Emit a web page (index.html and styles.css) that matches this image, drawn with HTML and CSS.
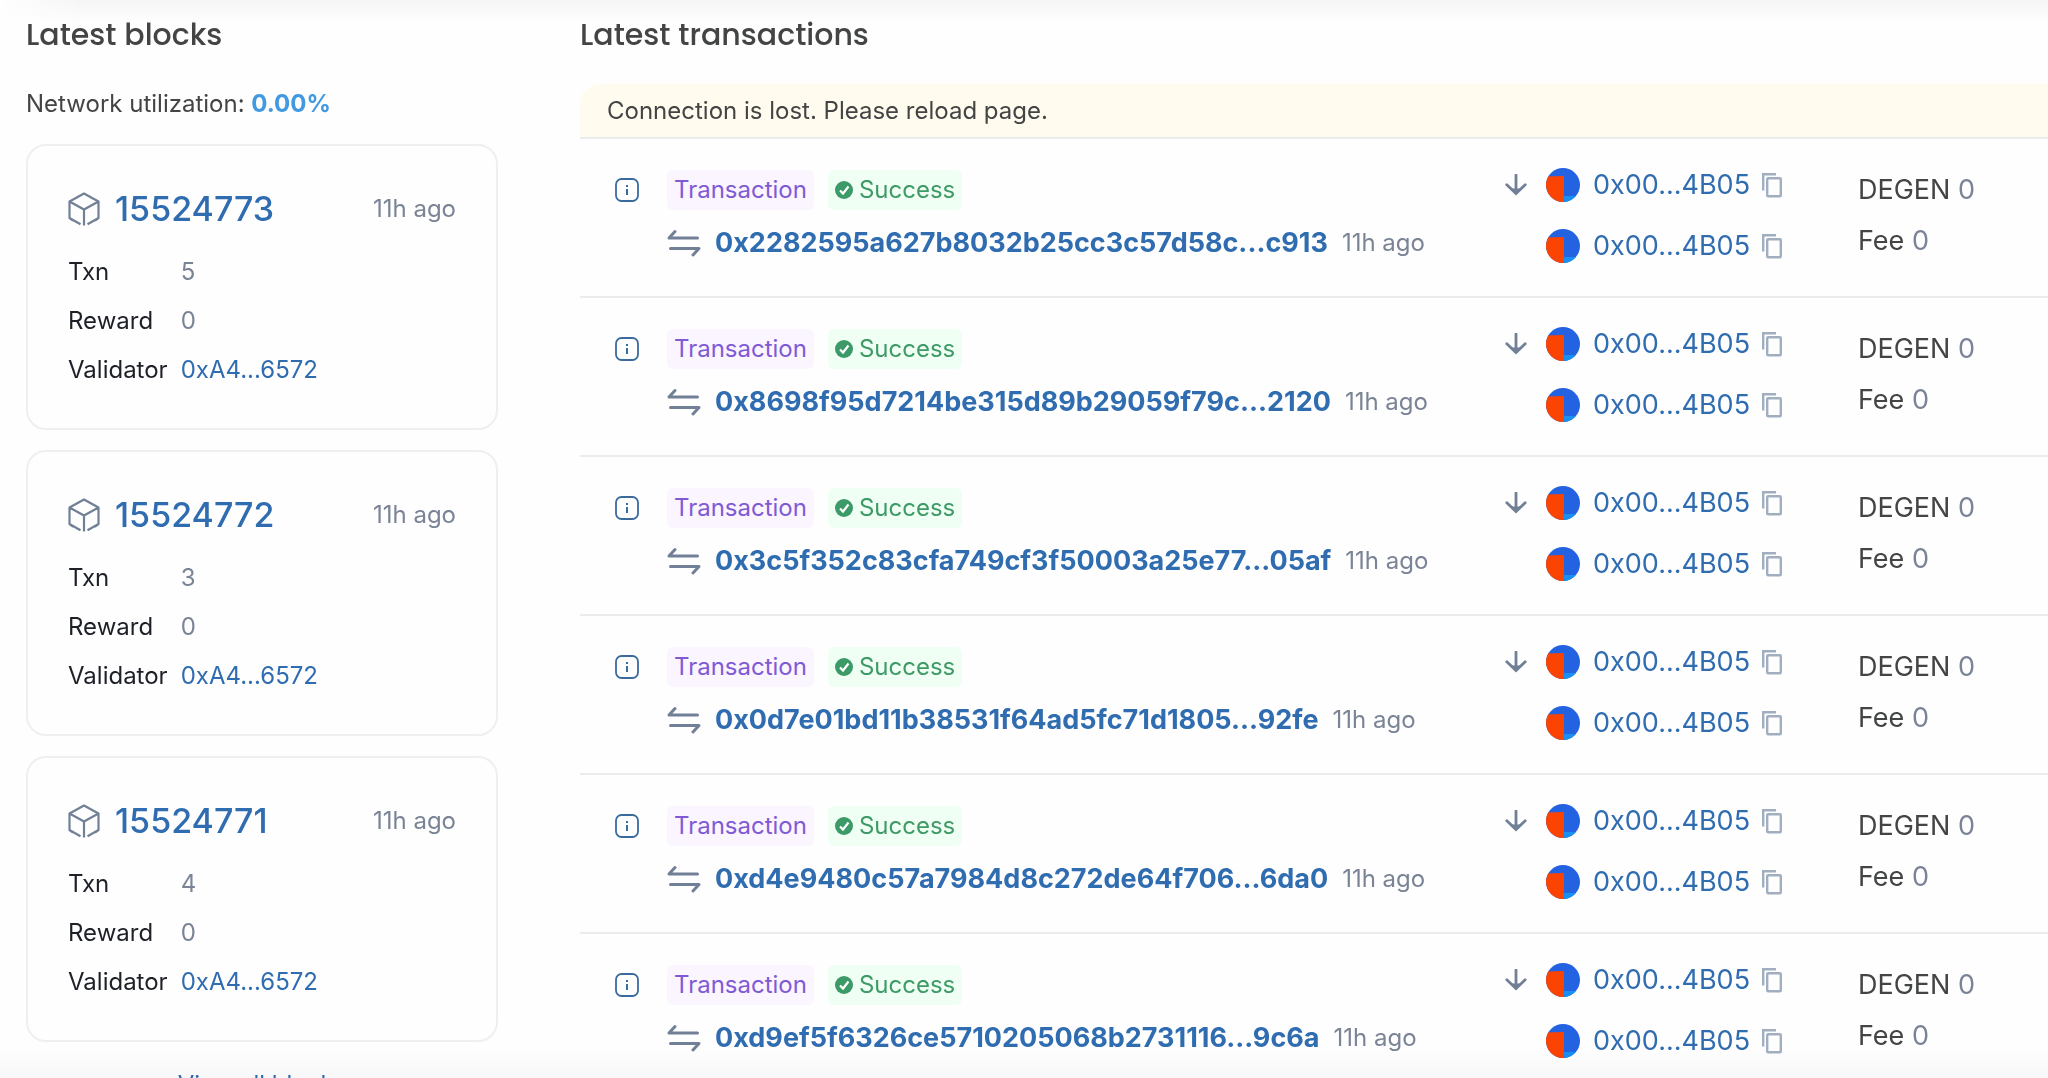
FILE: index.html
```html
<!DOCTYPE html>
<html lang="en">
<head>
<meta charset="utf-8">
<title>Latest blocks and transactions</title>
<link rel="stylesheet" href="styles.css">
</head>
<body>
<svg class="sprite" aria-hidden="true">
  <symbol id="cube" viewBox="0 0 32 34"><path d="M5 28.500 1.500 26V9.500L16 1.500l14.500 8V26L27 28.500M1.500 9.500 16 17.500l14.500-8M16 17.500V33.500M1.500 26l11 6.200M30.500 26l-11 6.200" fill="none" stroke="currentColor" stroke-width="2.200" stroke-linejoin="round"/></symbol>
  <symbol id="info" viewBox="0 0 24 24"><rect x="1" y="1" width="22" height="22" rx="5.500" fill="none" stroke="currentColor" stroke-width="1.800"/><path d="M12 11v6M12 7v2" stroke="currentColor" stroke-width="2"/></symbol>
  <symbol id="swap" viewBox="0 0 34 28"><path d="M30.500 9H2L8 2.500M3.500 19.500H32L26 26" fill="none" stroke="currentColor" stroke-width="3" stroke-linecap="round" stroke-linejoin="round"/></symbol>
  <symbol id="check" viewBox="0 0 18 18"><circle cx="9" cy="9" r="9" fill="currentColor"/><path d="M5 9.500 8 12.500l5.500-7" fill="none" stroke="#fff" stroke-width="2.200"/></symbol>
  <symbol id="down" viewBox="0 0 22 22"><path d="M11 1v18M1.800 10.800 11 19.500l9.200-8.700" fill="none" stroke="currentColor" stroke-width="2.800" stroke-linecap="round"/><path d="M6 14.500h10L11 20.500z" fill="currentColor"/></symbol>
  <symbol id="avatar" viewBox="0 0 34 34"><clipPath id="disc"><circle cx="17" cy="17" r="17"/></clipPath><g clip-path="url(#disc)"><path d="M0 0h34v34H0z" fill="#2362e1"/><path d="M18 28h16v6H18z" fill="#1890f2"/><path d="M0 8.500 18 8v26H0z" fill="#fb4302"/></g></symbol>
  <symbol id="copy" viewBox="0 0 20 26"><path d="M1.200 18.500V2.200H14" fill="none" stroke="currentColor" stroke-width="2.400"/><rect x="5.200" y="6.200" width="13.600" height="18" rx="1" fill="none" stroke="currentColor" stroke-width="2.400"/></symbol>
</svg>
<main class="page">
  <section class="blocks">
    <h2 class="title">Latest blocks</h2>
    <p class="utilization">Network utilization: <strong>0.00%</strong></p>
    <div class="cards">
      <article class="card">
        <header class="card-head"><svg class="cube"><use href="#cube"/></svg><a class="number" href="#">15524773</a><span class="time">11h ago</span></header>
        <dl class="facts"><dt>Txn</dt><dd>5</dd><dt>Reward</dt><dd>0</dd><dt>Validator</dt><dd><a href="#">0xA4...6572</a></dd></dl>
      </article>
      <article class="card">
        <header class="card-head"><svg class="cube"><use href="#cube"/></svg><a class="number" href="#">15524772</a><span class="time">11h ago</span></header>
        <dl class="facts"><dt>Txn</dt><dd>3</dd><dt>Reward</dt><dd>0</dd><dt>Validator</dt><dd><a href="#">0xA4...6572</a></dd></dl>
      </article>
      <article class="card">
        <header class="card-head"><svg class="cube"><use href="#cube"/></svg><a class="number" href="#">15524771</a><span class="time">11h ago</span></header>
        <dl class="facts"><dt>Txn</dt><dd>4</dd><dt>Reward</dt><dd>0</dd><dt>Validator</dt><dd><a href="#">0xA4...6572</a></dd></dl>
      </article>
    </div>
    <a class="all" href="#">View all blocks</a>
  </section>
  <section class="transactions">
    <h2 class="title">Latest transactions</h2>
    <p class="alert" role="alert">Connection is lost. Please reload page.</p>
    <ul class="rows">
      <li class="row">
        <button class="info" aria-label="Details"><svg><use href="#info"/></svg></button>
        <div class="tx">
          <div class="tags"><span class="tag kind">Transaction</span><span class="tag ok"><svg><use href="#check"/></svg>Success</span></div>
          <div class="hash"><svg><use href="#swap"/></svg><a href="#">0x2282595a627b8032b25cc3c57d58c...c913</a><span class="time">11h ago</span></div>
        </div>
        <div class="route">
          <svg class="down"><use href="#down"/></svg>
          <div class="addresses">
            <div class="address"><svg class="avatar"><use href="#avatar"/></svg><a href="#">0x00...4B05</a><button aria-label="Copy"><svg><use href="#copy"/></svg></button></div>
            <div class="address"><svg class="avatar"><use href="#avatar"/></svg><a href="#">0x00...4B05</a><button aria-label="Copy"><svg><use href="#copy"/></svg></button></div>
          </div>
        </div>
        <div class="amounts"><p>DEGEN <span>0</span></p><p>Fee <span>0</span></p></div>
      </li>
      <li class="row">
        <button class="info" aria-label="Details"><svg><use href="#info"/></svg></button>
        <div class="tx">
          <div class="tags"><span class="tag kind">Transaction</span><span class="tag ok"><svg><use href="#check"/></svg>Success</span></div>
          <div class="hash"><svg><use href="#swap"/></svg><a href="#">0x8698f95d7214be315d89b29059f79c...2120</a><span class="time">11h ago</span></div>
        </div>
        <div class="route">
          <svg class="down"><use href="#down"/></svg>
          <div class="addresses">
            <div class="address"><svg class="avatar"><use href="#avatar"/></svg><a href="#">0x00...4B05</a><button aria-label="Copy"><svg><use href="#copy"/></svg></button></div>
            <div class="address"><svg class="avatar"><use href="#avatar"/></svg><a href="#">0x00...4B05</a><button aria-label="Copy"><svg><use href="#copy"/></svg></button></div>
          </div>
        </div>
        <div class="amounts"><p>DEGEN <span>0</span></p><p>Fee <span>0</span></p></div>
      </li>
      <li class="row">
        <button class="info" aria-label="Details"><svg><use href="#info"/></svg></button>
        <div class="tx">
          <div class="tags"><span class="tag kind">Transaction</span><span class="tag ok"><svg><use href="#check"/></svg>Success</span></div>
          <div class="hash"><svg><use href="#swap"/></svg><a href="#">0x3c5f352c83cfa749cf3f50003a25e77...05af</a><span class="time">11h ago</span></div>
        </div>
        <div class="route">
          <svg class="down"><use href="#down"/></svg>
          <div class="addresses">
            <div class="address"><svg class="avatar"><use href="#avatar"/></svg><a href="#">0x00...4B05</a><button aria-label="Copy"><svg><use href="#copy"/></svg></button></div>
            <div class="address"><svg class="avatar"><use href="#avatar"/></svg><a href="#">0x00...4B05</a><button aria-label="Copy"><svg><use href="#copy"/></svg></button></div>
          </div>
        </div>
        <div class="amounts"><p>DEGEN <span>0</span></p><p>Fee <span>0</span></p></div>
      </li>
      <li class="row">
        <button class="info" aria-label="Details"><svg><use href="#info"/></svg></button>
        <div class="tx">
          <div class="tags"><span class="tag kind">Transaction</span><span class="tag ok"><svg><use href="#check"/></svg>Success</span></div>
          <div class="hash"><svg><use href="#swap"/></svg><a href="#">0x0d7e01bd11b38531f64ad5fc71d1805...92fe</a><span class="time">11h ago</span></div>
        </div>
        <div class="route">
          <svg class="down"><use href="#down"/></svg>
          <div class="addresses">
            <div class="address"><svg class="avatar"><use href="#avatar"/></svg><a href="#">0x00...4B05</a><button aria-label="Copy"><svg><use href="#copy"/></svg></button></div>
            <div class="address"><svg class="avatar"><use href="#avatar"/></svg><a href="#">0x00...4B05</a><button aria-label="Copy"><svg><use href="#copy"/></svg></button></div>
          </div>
        </div>
        <div class="amounts"><p>DEGEN <span>0</span></p><p>Fee <span>0</span></p></div>
      </li>
      <li class="row">
        <button class="info" aria-label="Details"><svg><use href="#info"/></svg></button>
        <div class="tx">
          <div class="tags"><span class="tag kind">Transaction</span><span class="tag ok"><svg><use href="#check"/></svg>Success</span></div>
          <div class="hash"><svg><use href="#swap"/></svg><a href="#">0xd4e9480c57a7984d8c272de64f706...6da0</a><span class="time">11h ago</span></div>
        </div>
        <div class="route">
          <svg class="down"><use href="#down"/></svg>
          <div class="addresses">
            <div class="address"><svg class="avatar"><use href="#avatar"/></svg><a href="#">0x00...4B05</a><button aria-label="Copy"><svg><use href="#copy"/></svg></button></div>
            <div class="address"><svg class="avatar"><use href="#avatar"/></svg><a href="#">0x00...4B05</a><button aria-label="Copy"><svg><use href="#copy"/></svg></button></div>
          </div>
        </div>
        <div class="amounts"><p>DEGEN <span>0</span></p><p>Fee <span>0</span></p></div>
      </li>
      <li class="row">
        <button class="info" aria-label="Details"><svg><use href="#info"/></svg></button>
        <div class="tx">
          <div class="tags"><span class="tag kind">Transaction</span><span class="tag ok"><svg><use href="#check"/></svg>Success</span></div>
          <div class="hash"><svg><use href="#swap"/></svg><a href="#">0xd9ef5f6326ce5710205068b2731116...9c6a</a><span class="time">11h ago</span></div>
        </div>
        <div class="route">
          <svg class="down"><use href="#down"/></svg>
          <div class="addresses">
            <div class="address"><svg class="avatar"><use href="#avatar"/></svg><a href="#">0x00...4B05</a><button aria-label="Copy"><svg><use href="#copy"/></svg></button></div>
            <div class="address"><svg class="avatar"><use href="#avatar"/></svg><a href="#">0x00...4B05</a><button aria-label="Copy"><svg><use href="#copy"/></svg></button></div>
          </div>
        </div>
        <div class="amounts"><p>DEGEN <span>0</span></p><p>Fee <span>0</span></p></div>
      </li>
    </ul>
  </section>
</main>
<div class="shade shade-top"></div>
<div class="shade shade-bottom"></div>
</body>
</html>
```
FILE: styles.css
```css
* { box-sizing: border-box; margin: 0; padding: 0; }

html { overflow: hidden; }

body {
  background: #fefefe;
  color: #434444;
  font: 24px/32px Inter, "Liberation Sans", sans-serif;
}

a { color: #2f6cb0; text-decoration: none; }
ul { list-style: none; }
button { border: 0; background: none; cursor: pointer; }
svg { display: block; flex: none; }
.sprite { position: absolute; width: 0; height: 0; }

.page {
  display: grid;
  grid-template-columns: 472px minmax(0, 1fr);
  gap: 82px;
  padding: 14px 0 0 26px;
}

.title {
  font: 500 30px/42px Poppins, Inter, "Liberation Sans", sans-serif;
}

.time { color: #7a8496; }

/* Blocks */
.utilization { margin-top: 32px; }
.utilization strong { color: #4299e1; font-weight: 700; }

.cards {
  display: grid;
  gap: 20px;
  margin-top: 24px;
}

.card {
  height: 286px;
  padding: 42px 40px 0;
  border: 2px solid #eeeff1;
  border-radius: 20px;
}

.card-head {
  display: flex;
  align-items: center;
  height: 42px;
}

.cube { width: 32px; height: 34px; margin-right: 15px; color: #718096; }
.number { font-size: 34px; font-weight: 500; }
.card-head .time { margin-left: auto; }

.facts {
  display: grid;
  grid-template-columns: max-content 1fr;
  column-gap: 13px;
  margin-top: 17px;
  line-height: 49px;
}

.facts dt { color: #1d2027; }
.facts dd { color: #7a8496; }

.all { display: block; margin-top: 27px; text-align: center; }

/* Transactions */
.alert {
  height: 53px;
  margin-top: 28px;
  padding-left: 27px;
  border-radius: 20px 0 0 0;
  background: #fffbef;
  line-height: 53px;
}

.rows { border-top: 2px solid #ebecee; }

.row {
  display: grid;
  grid-template-columns: 24px minmax(0, 1fr) 353px 190px;
  height: 159px;
  padding-left: 35px;
  border-bottom: 2px solid #ebecee;
}

.info { width: 24px; height: 24px; margin-top: 39px; color: #3b6a9f; }
.info svg { width: 24px; height: 24px; }

.tx { padding: 31px 0 0 28px; }
.tags { display: flex; gap: 14px; }

.tag {
  display: flex;
  align-items: center;
  gap: 6px;
  height: 40px;
  padding: 0 7px;
  border-radius: 6px;
}

.kind { background: #faf5ff; color: #805ad5; }
.ok { background: #f0fff4; color: #3e9a66; }
.ok svg { width: 18px; height: 18px; color: #3b9a67; }

.hash {
  display: flex;
  align-items: center;
  height: 44px;
  margin-top: 11px;
  white-space: nowrap;
}

.hash svg { width: 34px; height: 28px; margin-right: 14px; color: #718096; }
.hash a { margin-right: 14px; font-size: 27px; font-weight: 700; }

.route { display: flex; gap: 19px; padding-top: 29px; }
.down { width: 22px; height: 22px; margin-top: 6px; color: #718096; }
.addresses { display: grid; gap: 27px; align-content: start; }

.address {
  display: flex;
  align-items: center;
  height: 34px;
  font-size: 27px;
}

.avatar { width: 34px; height: 34px; margin-right: 13px; }
.address button { margin-left: 12px; color: #a0aec0; }
.address button svg { width: 20px; height: 26px; }

.amounts { padding-top: 25px; font-size: 27px; line-height: 51px; }
.amounts span { color: #7a8496; }

/* Soft shadows at the window's edges */
.shade { position: fixed; right: 0; left: 0; height: 32px; pointer-events: none; }
.shade-top {
  top: 0;
  background: linear-gradient(90deg, #fefefe, transparent 80px), linear-gradient(rgba(0, 0, 0, 0.03), transparent);
  height: 24px;
  z-index: -1;
}
.shade-bottom { bottom: 0; background: linear-gradient(transparent, rgba(0, 0, 0, 0.025)); }
```
